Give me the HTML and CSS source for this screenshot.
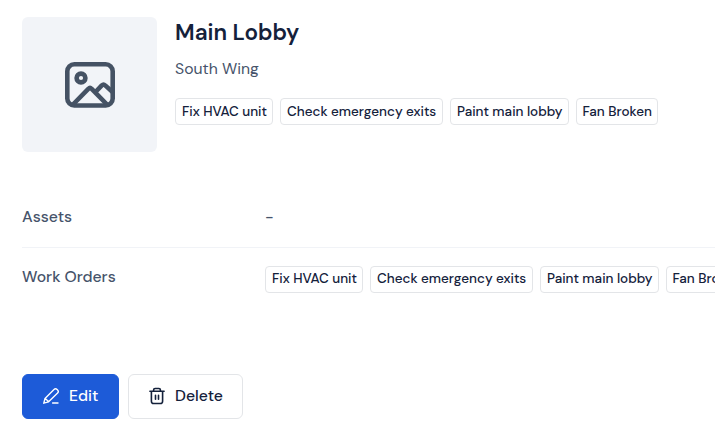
FILE: index.html
```html
<!DOCTYPE html>
<html lang="en">
<head>
<meta charset="utf-8">
<title>Main Lobby</title>
<link rel="stylesheet" href="styles.css">
</head>
<body>
<main class="page">
  <header class="summary">
    <div class="thumb">
      <svg class="thumb-icon" width="50" height="46" viewBox="65 62 50 46" fill="none" stroke="currentColor" stroke-width="4.6" stroke-linecap="round" stroke-linejoin="round">
        <rect x="67.3" y="64.3" width="45.4" height="41.2" rx="7"/>
        <circle cx="81" cy="78" r="4.4"/>
        <path d="M73 104.5L88.3 88.8Q90 87.2 91.7 88.8L107 104.5M95.5 92L101.8 85.4Q103.5 83.8 105.2 85.4L112 91.5"/>
      </svg>
    </div>
    <div class="info">
      <h1 class="title">Main Lobby</h1>
      <p class="subtitle">South Wing</p>
      <ul class="chips">
        <li class="chip fix"><span>Fix HVAC unit</span></li>
        <li class="chip check"><span>Check emergency exits</span></li>
        <li class="chip paint"><span>Paint main lobby</span></li>
        <li class="chip fan"><span>Fan Broken</span></li>
      </ul>
    </div>
  </header>
  <section class="details">
    <div class="row assets">
      <div class="label">Assets</div>
      <div class="value">-</div>
    </div>
    <div class="row orders">
      <div class="label">Work Orders</div>
      <ul class="chips">
        <li class="chip fix"><span>Fix HVAC unit</span></li>
        <li class="chip check"><span>Check emergency exits</span></li>
        <li class="chip paint"><span>Paint main lobby</span></li>
        <li class="chip fan"><span>Fan Broken</span></li>
      </ul>
    </div>
  </section>
  <footer class="actions">
    <button class="button edit">
      <svg width="18" height="18" viewBox="0 0 18 18" fill="none" stroke="currentColor" stroke-width="1.4" stroke-linecap="round" stroke-linejoin="round"><path d="M1.8 16.2L3 11.5L12 2.4C14 .6 17.8 3.7 15.6 6.1L6.6 14.8ZM3.2 11.5L6.5 14.6M10.6 16H16"/></svg>
      <span>Edit</span>
    </button>
    <button class="button delete">
      <svg width="18" height="18" viewBox="0 0 18 18" fill="none" stroke="currentColor" stroke-width="1.6" stroke-linecap="round" stroke-linejoin="round"><path d="M1.9 4.2H16.1M5.6 4V3Q5.6 1.5 7.1 1.5H10.9Q12.4 1.5 12.4 3V4M3.4 4.5V14.2Q3.4 16.5 5.7 16.5H12.3Q14.6 16.5 14.6 14.2V4.5M7.5 8.3V12.2M10.5 8.3V12.2"/></svg>
      <span>Delete</span>
    </button>
  </footer>
</main>
</body>
</html>
```
FILE: styles.css
```css
* { box-sizing: border-box; }
body { margin: 0; background: #fff; color: #14213b; font-family: "DM Sans", Lato, sans-serif; font-size: 15.75px; overflow: hidden; }
h1, p, ul { margin: 0; padding: 0; }
.page { padding: 17px 0 0 22px; height: 447px; overflow: hidden; }
.summary { display: flex; gap: 18px; height: 135px; }
.thumb { width: 135px; height: 135px; border-radius: 6px; background: #f2f4f8; color: #455264; display: grid; place-items: center; }
.thumb-icon { display: block; }
.title { font-size: 22.5px; line-height: 32px; font-weight: 600; }
.subtitle { margin-top: 9px; line-height: 22px; color: #46536a; font-weight: 400; }
.chips { display: flex; gap: 7px; list-style: none; }
.info .chips { margin-top: 18px; }
.chip { height: 27px; padding: 0 6px; border: 1px solid #e3e5e8; border-radius: 4px; font-size: 13.5px; line-height: 25px; font-weight: 500; white-space: nowrap; flex: none; }
.fix { width: 98px; }
.check { width: 163px; }
.paint { width: 119px; }
.fan { width: 82px; padding-left: 5.5px; }
.details { margin-top: 35px; }
.row { display: grid; grid-template-columns: 243px 1fr; color: #46536a; font-weight: 500; }
.assets { height: 61px; padding-top: 19px; line-height: 22px; border-bottom: 1px solid #f1f3f7; }
.orders { padding-top: 18px; line-height: 22px; }
.orders .chip { color: #14213b; line-height: 24px; }
.actions { display: flex; gap: 9px; margin-top: 81px; }
.button { height: 45px; display: flex; align-items: center; gap: 9px; padding: 0 0 2px 19px; border: 1px solid #e3e5e8; border-radius: 6px; background: #fff; color: #14213b; font: 500 15.75px "DM Sans", Lato, sans-serif; }
.edit { width: 97px; background: #1d5bd8; border-color: #1d5bd8; color: #fff; }
.delete { width: 115px; }
```
